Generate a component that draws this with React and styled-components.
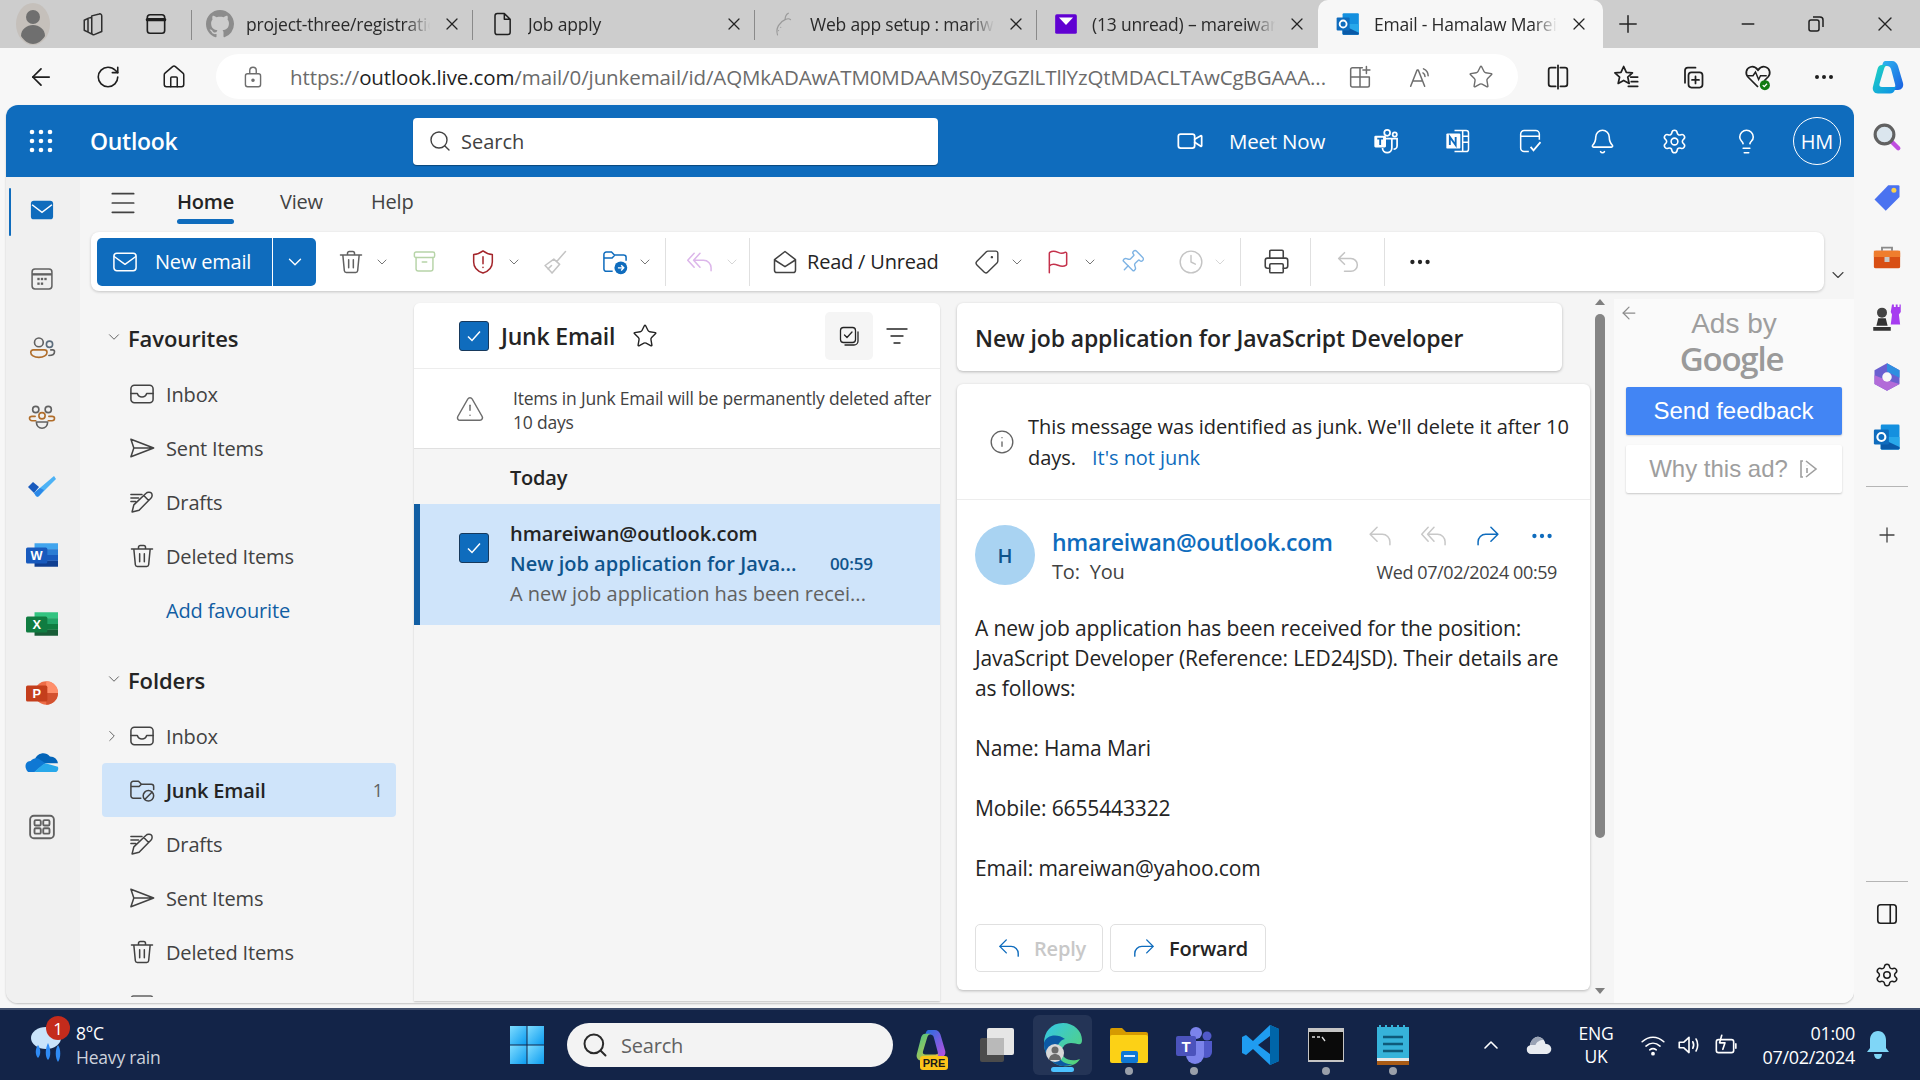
import React from 'react';
import styled, { createGlobalStyle } from 'styled-components';
import { ArrowLeft, RotateCw, Home as HomeI, Plus, X, Minus, Search, Bell, Settings, Lightbulb, Star, Info, TriangleAlert, ChevronDown, ChevronRight, ChevronUp, Menu, Printer, Pin, Clock, Flag, Tag, MoreHorizontal, Video, ListFilter } from 'lucide-react';

const FONT = '"Open Sans", "Noto Sans", sans-serif';

const Global = createGlobalStyle`
  html, body { margin: 0; padding: 0; width: 1920px; height: 1080px; overflow: hidden; background: #f7f7f7; }
  body { font-family: ${FONT}; color: #242424; }
  * { box-sizing: border-box; }
  svg { display: block; flex: none; }
`;

const Ic = ({ s = 24, c = 'currentColor', w = 1.3, vb = '0 0 24 24', children }) => (
  <svg width={s} height={s} viewBox={vb} fill="none" stroke={c} strokeWidth={w} strokeLinecap="round" strokeLinejoin="round">{children}</svg>
);
const MailI = (p) => <Ic {...p}><rect x="2.5" y="4.5" width="19" height="15" rx="2.5" /><path d="M3 7.5l9 6.5 9-6.5" /></Ic>;
const InboxI = (p) => <Ic {...p}><rect x="2.5" y="4.5" width="19" height="15" rx="3" /><path d="M2.5 11.5H8c.6 2 2 3 4 3s3.4-1 4-3h5.5" /></Ic>;
const SendI = (p) => <Ic {...p}><path d="M2.5 4.5L22 12 2.5 19.5 5 12zM5 12h17" /></Ic>;
const DraftI = (p) => <Ic {...p}><path d="M15.5 4.5c1-1 3.5-1.2 4.500-.2s.8 3.300-.2 4.300L9.500 19 3.500 20.500 5 14.500z M13.500 6.500l4.200 4.200 M2.500 5.500H12 M2.500 8.500H9 M2.500 11.500H6.500" /></Ic>;
const TrashI = (p) => <Ic {...p}><path d="M3 6h18M9 6V4.500A1.500 1.500 0 0 1 10.500 3h3A1.500 1.500 0 0 1 15 4.500V6M5 6l1.300 13.500A1.700 1.700 0 0 0 8 21h8a1.700 1.700 0 0 0 1.700-1.500L19 6M10 10v7M14 10v7" /></Ic>;
const JunkI = (p) => <Ic {...p}><path d="M11 19H4.500A2 2 0 0 1 2.500 17V6.500a2 2 0 0 1 2-2h4.500l2.500 2.500h8.500a2 2 0 0 1 2 2v2.500M2.500 9h7l2-2" /><circle cx="17.500" cy="17" r="4.500" /><path d="M14.500 20l6-6" /></Ic>;
const ReplyI = (p) => <Ic {...p}><path d="M9.500 4.500L3.500 10.500l6 6M3.500 10.500H14a6.500 6.500 0 0 1 6.500 6.500v2.500" /></Ic>;
const ReplyAllI = (p) => <Ic {...p}><path d="M7 4.500L1.500 10.500 7 16.500M12 4.500L6.500 10.500l5.500 6M6.500 10.500H15a6.500 6.500 0 0 1 6.500 6.500v2.500" /></Ic>;
const ForwardI = (p) => <Ic {...p}><path d="M14.500 4.500l6 6-6 6M20.500 10.500H10A6.500 6.500 0 0 0 3.500 17v2.500" /></Ic>;
const UndoI = (p) => <Ic {...p}><path d="M9 4L4 9l5 5M4 9h10.500a5.500 5.500 0 0 1 0 11H9" /></Ic>;
const ArchiveI = (p) => <Ic {...p}><rect x="3" y="3.500" width="18" height="5" rx="1.500" /><path d="M4.500 8.500v10A2 2 0 0 0 6.500 20.500h11a2 2 0 0 0 2-2v-10M10 12.500h4" /></Ic>;
const ShieldI = (p) => <Ic {...p}><path d="M12 2.500c2.500 2 5.300 3 8 3v6.500c0 4.500-3 7.800-8 9.500-5-1.700-8-5-8-9.500V5.500c2.700 0 5.500-1 8-3zM12 7.500v6M12 16.500v.3" /></Ic>;
const BroomI = (p) => <Ic {...p}><path d="M21 3l-7.500 8.500M11 9.500l5 4.500-6.500 7.500-6-6.500zM6 18l3-3" /></Ic>;
const MoveI = () => <svg width="28" height="28" viewBox="0 0 24 24" fill="none"><path d="M10 20H4.500a2 2 0 0 1-2-2V5.500a2 2 0 0 1 2-2h4.500l2.500 2.500h8a2 2 0 0 1 2 2v3M2.500 8.500h7l2-2" stroke="#0f6cbd" strokeWidth="1.300" /><circle cx="17" cy="17" r="5.500" fill="#0f6cbd" /><path d="M14.500 17h5M17.300 14.800l2.200 2.200-2.200 2.200" stroke="#fff" strokeWidth="1.200" /></svg>;
const ReadI = (p) => <Ic {...p}><path d="M3 10l9-7 9 7v9a2 2 0 0 1-2 2H5a2 2 0 0 1-2-2zM3.500 10.500L12 16l8.500-5.500" /></Ic>;
const NoteI = () => <svg width="28" height="28" viewBox="0 0 24 24" fill="none" stroke="#fff" strokeWidth="1.300"><path d="M9 3h10a2 2 0 0 1 2 2v14a2 2 0 0 1-2 2H9M16 3v18M16 8h5M16 13h5" /><rect x="2" y="5.500" width="12" height="13" rx="1" fill="#fff" stroke="none" /><path d="M5 15.500v-7l5 7v-7" stroke="#0f6cbd" strokeWidth="1.600" /></svg>;
const TeamsLine = () => <svg width="28" height="28" viewBox="0 0 24 24" fill="none" stroke="#fff" strokeWidth="1.500"><circle cx="13" cy="5" r="2.500" /><circle cx="19.500" cy="6.500" r="1.800" /><path d="M15 10h6.500v6a3 3 0 0 1-3 3M8 10h9v8a4 4 0 0 1-8 0" /><rect x="2" y="7.500" width="10" height="10" rx="1" fill="#fff" stroke="none" /><path d="M4.500 10h5M7 10v5.500" stroke="#0f6cbd" strokeWidth="1.600" /></svg>;
const TodoBoard = () => <svg width="28" height="28" viewBox="0 0 24 24" fill="none" stroke="#fff" strokeWidth="1.300"><path d="M11 21H7a3 3 0 0 1-3-3V6a3 3 0 0 1 3-3h10a3 3 0 0 1 3 3v5M4 8h16" /><path d="M12.500 17l2.500 3 6-7" strokeWidth="1.500" /></svg>;
const Workspaces = () => <Ic s={30} c="#2e2e2e" w={1.200}><path d="M11 5.500l6-1.500a1.500 1.500 0 0 1 2 1.500V18l-6 2.500a1.500 1.500 0 0 1-2-1.500zM11 6.500l-3 1v11l3 1.500M8 7.500l-3 1.500v8l3 1.500" /></Ic>;
const TabsI = () => <Ic s={26} c="#1f1f1f" w={1.500}><rect x="4" y="3.500" width="16" height="17" rx="2.500" /><path d="M4 8h16" strokeWidth="3" /></Ic>;

const AddWidget = () => <Ic s={28} c="#6e6e6e"><path d="M4 12h16v7a1.500 1.500 0 0 1-1.500 1.500h-13A1.500 1.500 0 0 1 4 19zM4 12V5.500A1.500 1.500 0 0 1 5.500 4H14M12 4v16.500M14 12h6M17.500 3v6M14.500 6h6" /></Ic>;
const ReadAloud = () => <Ic s={28} c="#6e6e6e"><path d="M4 20l5.500-14h1L16 20M6 15.500h8M15 5c2.500 1 4 3.200 4 6M14.500 8.500c1 .5 1.800 1.500 1.800 3" /></Ic>;

const Split = () => <Ic s={28} c="#1f1f1f" w={1.500}><path d="M10 4H6a2 2 0 0 0-2 2v12a2 2 0 0 0 2 2h4M14 4h4a2 2 0 0 1 2 2v12a2 2 0 0 1-2 2h-4M12 2v20" /></Ic>;
const Favs = () => <Ic s={28} c="#1f1f1f" w={1.500}><path d="M10 3l2.300 5 5.200.5-4 3.600 1.200 5.400L10 15l-4.700 2.500 1.200-5.400-4-3.600 5.200-.5zM16 12h6M16.500 16h5.500M14 20h8" /></Ic>;
const Collect = () => <Ic s={28} c="#1f1f1f" w={1.500}><path d="M6 17V6.500A2.500 2.500 0 0 1 8.500 4H15" /><rect x="9" y="8" width="12" height="13" rx="2.500" /><path d="M15 11.500v6M12 14.500h6" /></Ic>;
const Health = () => <svg width="30" height="30" viewBox="0 0 24 24" fill="none"><path d="M12 20L4 12c-2.500-2.700-1.500-7 2-8 2.500-.7 4.500.5 6 2.500 1.500-2 3.500-3.200 6-2.500 3.500 1 4.500 5.300 2 8l-3 3" stroke="#1f1f1f" strokeWidth="1.400" /><path d="M4 11h4l2-3 2.500 6 1.500-3h5" stroke="#1f1f1f" strokeWidth="1.200" /><circle cx="17.500" cy="18.500" r="4" fill="#107c10" /><path d="M15.800 18.500l1.200 1.200 2.200-2.300" stroke="#fff" strokeWidth="1" /></svg>;
const CopilotLogo = ({ s = 36, id = 'cp', a = ['#2fb6f0', '#1b5fe0'], b = ['#1fd6c0', '#0e8fe8'] }) => (
  <svg width={s} height={s} viewBox="0 0 36 36">
    <defs>
      <linearGradient id={`${id}a`} x1="0" y1="0" x2="1" y2="1"><stop offset="0" stopColor={a[0]} /><stop offset="1" stopColor={a[1]} /></linearGradient>
      <linearGradient id={`${id}b`} x1="0" y1="0" x2="1" y2="1"><stop offset="0" stopColor={b[0]} /><stop offset="1" stopColor={b[1]} /></linearGradient>
    </defs>
    <path d="M15 2h7c3 0 5 2 6 5l5 17c1 4-1.500 7-5 7h-7c3 0 5-2.500 4-6L21 10c-.6-2-2-3-4-3h-5c.5-2.500 1.500-5 3-5z" fill={`url(#${id}a)`} />
    <path d="M12 6h7c-2.500 0-4.500 1.500-5 4L9.500 25c-.5 2 .5 3 2.500 3h11c1.500 0 2.500-.5 3-1l-1 3.500c-.8 2.500-2.500 4-5 4H8c-4 0-6-3.500-5-7L7.500 10c.8-2.500 2-4 4.500-4z" fill={`url(#${id}b)`} />
  </svg>
);

const LensLogo = () => <svg width="30" height="30" viewBox="0 0 24 24"><path d="M14 14l7 7" stroke="#c04fe0" strokeWidth="3.500" strokeLinecap="round" /><circle cx="10" cy="10" r="7.500" fill="#dbe6ee" stroke="#616161" strokeWidth="2.500" /></svg>;
const TagLogo = () => <svg width="30" height="30" viewBox="0 0 24 24"><path d="M13 2.500h8a1 1 0 0 1 1 1v8.500L11 23l-9-9z" fill="#4a72f0" /><circle cx="17.500" cy="6.500" r="2" fill="#fbd04a" /></svg>;
const ToolboxLogo = () => <svg width="30" height="30" viewBox="0 0 24 24"><path d="M8 7V4.500h8V7" fill="none" stroke="#8a8a8a" strokeWidth="1.500" /><rect x="1.500" y="7" width="21" height="14" rx="1.500" fill="#d84f14" /><rect x="1.500" y="7" width="21" height="5" fill="#ef7d2e" /><rect x="10" y="12" width="4" height="4" fill="#c8c8c8" /></svg>;
const ChessLogo = () => <svg width="30" height="30" viewBox="0 0 24 24"><path d="M16 2h1.500v2H19V2h1.500v2H22V2h1v6l-1.500 2 1 8H15l1-8-1-2z" fill="#a63cf0" /><circle cx="8" cy="8.500" r="4" fill="#444" /><path d="M5 13h6l1.500 6H3.500zM1 20h14v3H1z" fill="#333" /></svg>;
const M365Logo = () => <svg width="30" height="30" viewBox="0 0 24 24"><path d="M12 1l10 5.500v11L12 23 2 17.500v-11z" fill="#6a5fd0" /><path d="M12 1l10 5.500v6L12 7.500z" fill="#2f8fe0" /><path d="M2 10.500V17.500L12 23l10-5.500-10-3z" fill="#b26bd8" /><circle cx="12" cy="12" r="3.800" fill="#f7f7f7" /></svg>;
const OutlookLogo = ({ s = 30 }) => <svg width={s} height={s} viewBox="0 0 24 24"><rect x="7" y="2" width="15" height="20" rx="1" fill="#1490df" /><path d="M7 12l15 0v9a1 1 0 0 1-1 1H8a1 1 0 0 1-1-1z" fill="#28a8ea" /><path d="M7 13l15 7v1a1 1 0 0 1-1 1H8a1 1 0 0 1-1-1z" fill="#0a5aa8" /><rect x="1.500" y="6" width="12" height="12" rx="1" fill="#0f6cbd" /><circle cx="7.500" cy="12" r="3.200" fill="none" stroke="#fff" strokeWidth="1.700" /></svg>;

const BrandTile = ({ letter, tile, bands, round }) => (
  <svg width="32" height="24" viewBox="0 0 30 22">
    {round
      ? <g><circle cx="19" cy="11" r="11" fill="#ed6c47" /><path d="M19 0a11 11 0 0 1 11 11H19z" fill="#ff8f6b" /><path d="M19 11h11a11 11 0 0 1-11 11z" fill="#d35230" /></g>
      : bands.map((b, i) => <rect key={b} x="8" y={i * 5.5} width="22" height="5.5" fill={b} />)}
    <rect x="0" y="4" width="20" height="15" rx="1.500" fill={tile} />
    <text x="10" y="16" textAnchor="middle" fontFamily="Liberation Sans, sans-serif" fontWeight="700" fontSize="12" fill="#fff">{letter}</text>
  </svg>
);
const OneDriveLogo = ({ s = 34 }) => <svg width={s} height={s * 0.6} viewBox="0 0 30 18"><path d="M9 6c2-5 9-7 13-2 4 0 7 3 7 6H12z" fill="#0364b8" /><path d="M1 15c-1.500-3 0-7 4-7 2-2 4-3 7-2l6 4-10 8H4c-1 0-2.500-1-3-3z" fill="#0f78d4" /><path d="M8 18h18c3 0 4-3 3-5l-11-3c-4 2-7 5-10 8z" fill="#28a8ea" /></svg>;
const TodoLogo = () => <svg width="30" height="24" viewBox="0 0 30 24"><path d="M1 13l5-5 6 5-5 6z" fill="#185abd" /><path d="M7 19l20-17 2 3-17 17c-1 1-2 1-3 0z" fill="#4db2f5" /><path d="M7 19l6-5 4 2-5 6c-1 1-2 1-3 0z" fill="#2b88e8" /></svg>;
const PeopleI = () => <Ic s={30} c="#5b6c7c"><circle cx="9.500" cy="7.500" r="3.500" stroke="#616161" /><circle cx="18" cy="9" r="2.500" /><path d="M3 15.500a2 2 0 0 1 2-2h9a2 2 0 0 1 2 2c0 2-2.500 4-6.500 4S3 17.500 3 15.500z" stroke="#b06d2a" /><path d="M19 13.500h1.500a1.500 1.500 0 0 1 1.500 1.500c0 1.500-1.500 3-4.500 3" stroke="#616161" /></Ic>;
const GroupsI = () => <Ic s={30} c="#616161"><circle cx="7" cy="6" r="2.500" /><circle cx="17" cy="6" r="2.500" /><circle cx="12" cy="11" r="2.500" stroke="#b06d2a" /><path d="M7 15H4a2 2 0 0 1-2-2c0-1 .8-1.500 2-1.500h2.500M17 15h3a2 2 0 0 0 2-2c0-1-.8-1.500-2-1.500h-2.500" stroke="#b06d2a" /><path d="M7.500 16h9c0 3-2 5-4.500 5s-4.500-2-4.500-5z" /></Ic>;
const CalI = () => <svg width="28" height="28" viewBox="0 0 24 24" fill="none" stroke="#616161" strokeWidth="1.300"><rect x="3.500" y="3.500" width="17" height="17" rx="2.500" /><path d="M3.500 8h17" strokeWidth="2" /><g fill="#616161" stroke="none"><rect x="8" y="11" width="2" height="2" /><rect x="11" y="11" width="2" height="2" /><rect x="14" y="11" width="2" height="2" /><rect x="8" y="15" width="2" height="2" /><rect x="11" y="15" width="2" height="2" /></g></svg>;
const AppsI = () => <svg width="30" height="30" viewBox="0 0 24 24" fill="none" stroke="#616161" strokeWidth="1.500"><rect x="2.500" y="3" width="19" height="18" rx="3" /><rect x="6" y="6.500" width="5" height="4.300" rx="1" /><rect x="13" y="6.500" width="5" height="4.300" rx="1" /><rect x="6" y="13" width="5" height="4.300" rx="1" /><rect x="13" y="13" width="5" height="4.300" rx="1" /></svg>;
const RailMail = () => <svg width="28" height="28" viewBox="0 0 24 24"><rect x="2.500" y="4" width="19" height="16" rx="2.500" fill="#0f6cbd" /><path d="M3.500 7.500L12 14l8.500-6.500" stroke="#fff" strokeWidth="1.300" fill="none" /></svg>;
const MultiSel = () => <Ic s={24} c="#242424"><rect x="3.500" y="3.500" width="15" height="15" rx="3" /><path d="M7.500 11l2.500 2.500 5-5.500M21 8v9a4 4 0 0 1-4 4H8" /></Ic>;
const PanelI = () => <Ic s={26} c="#1f1f1f" w={1.500}><rect x="3.500" y="3.500" width="17" height="17" rx="2.500" /><path d="M15 3.500v17" /></Ic>;

const GitHubLogo = () => <svg width="28" height="28" viewBox="0 0 16 16" fill="#8c8c8c"><path d="M8 0C3.580 0 0 3.580 0 8c0 3.540 2.290 6.530 5.470 7.590.4.070.55-.170.55-.380 0-.190-.010-.820-.010-1.490-2.010.370-2.530-.490-2.690-.940-.090-.230-.480-.940-.820-1.130-.280-.150-.680-.520-.010-.530.630-.010 1.080.580 1.230.820.720 1.210 1.870.870 2.330.660.070-.520.280-.870.510-1.070-1.780-.200-3.640-.890-3.640-3.950 0-.870.310-1.590.820-2.150-.080-.200-.360-1.020.080-2.120 0 0 .670-.210 2.200.820.640-.180 1.320-.270 2-.270s1.360.090 2 .270c1.530-1.040 2.200-.820 2.200-.820.440 1.100.160 1.920.080 2.120.510.560.820 1.270.820 2.150 0 3.070-1.870 3.750-3.650 3.950.290.250.540.730.540 1.480 0 1.070-.010 1.930-.010 2.200 0 .210.150.460.550.380A8.010 8.010 0 0 0 16 8c0-4.420-3.580-8-8-8z" /></svg>;
const DocI = () => <Ic s={28} c="#1f1f1f" w={1.300}><path d="M6 5a2 2 0 0 1 2-2h6l5 5v11a2 2 0 0 1-2 2H8a2 2 0 0 1-2-2zM14 3v5h5" /></Ic>;
const SproutI = () => <Ic s={26} c="#9a9a9a" w={1.100}><path d="M6 22c-2-6 2-12 7-14M13 8c0-3 1-5 3-6M13 8c2-1 4-1 5 0M9 15v.1M7 18v.1" /></Ic>;
const YahooI = () => <svg width="26" height="26" viewBox="0 0 24 24"><rect x="2" y="3" width="20" height="18" rx="1.500" fill="#6001d2" /><path d="M5.500 6h13L12 13z" fill="#fff" /></svg>;

const Avatar = () => <svg width="38" height="44" viewBox="0 0 38 44"><ellipse cx="19" cy="22" rx="17" ry="21" fill="#c5c0bb" /><circle cx="19" cy="15" r="7" fill="#6f6f6f" /><path d="M7 34c0-7 6-11 12-11s12 4 12 11c-3 5-8 8-12 8s-9-3-12-8z" fill="#6f6f6f" /></svg>;

const Page = styled.div`width: 1920px; height: 1080px; display: flex; flex-direction: column; overflow: hidden;`;

const TabStrip = styled.div`height: 48px; background: #cdcdcd; display: flex; align-items: center;`;
const StripSlot = styled.div`width: ${(p) => p.$w}px; height: 48px; display: flex; align-items: center; justify-content: center; flex: none;`;
const Tab = styled.div`
  width: ${(p) => p.$w}px; height: 48px; flex: none; display: flex; align-items: center; padding: 0 11px 0 15px; position: relative;
  ${(p) => p.$active ? 'background:#f7f7f7; border-radius: 10px 10px 0 0; padding-left:16px; padding-right:14px;' : ''}
  ${(p) => p.$rule ? `&::after{content:'';position:absolute;right:0;top:10px;bottom:8px;width:1px;background:#8a8a8a;}` : ''}
  ${(p) => p.$ruleLeft ? `&::before{content:'';position:absolute;left:0;top:10px;bottom:8px;width:1px;background:#8a8a8a;}` : ''}
`;
const TabIcon = styled.div`width: 28px; display: flex; justify-content: center; margin-right: ${(p) => p.$mr ?? 12}px;`;
const TabText = styled.div`
  flex: 1; min-width: 0; margin-right: 6px; font-size: 17.5px; color: #2a2a2a; white-space: nowrap; overflow: hidden; letter-spacing: -0.2px;
  mask-image: linear-gradient(90deg, #000 84%, transparent 97%);
`;
const WinSlot = styled.div`width: ${(p) => p.$w}px; margin-left: ${(p) => p.$ml || 0}px; display: flex; justify-content: center; flex: none;`;

const AddressRow = styled.div`height: 57px; background: #f7f7f7; display: flex; align-items: center; flex: none;`;
const NavSlot = styled.div`width: ${(p) => p.$w}px; margin-left: ${(p) => p.$ml || 0}px; display: flex; justify-content: center; flex: none;`;
const Pill = styled.div`width: 1302px; height: 45px; margin-left: 27px; background: #fff; border-radius: 23px; display: flex; align-items: center; padding-left: 24px; flex: none;`;
const Url = styled.div`width: 1040px; margin-left: 24px; font-size: 20.5px; color: #6b6b6b; white-space: nowrap; overflow: hidden; letter-spacing: -0.1px; b { font-weight: 400; color: #1f1f1f; }`;

const Workarea = styled.div`flex: 1; min-height: 0; display: flex;`;
const Frame = styled.div`
  width: 1848px; height: 898px; margin-left: 6px; flex: none; display: flex; flex-direction: column; overflow: hidden;
  border-radius: 12px; background: #f5f5f5; box-shadow: 0 1px 2px rgba(0,0,0,.22);
`;
const Header = styled.div`height: 72px; flex: none; background: #0f6cbd; display: flex; align-items: center; color: #fff;`;
const HeadSlot = styled.div`width: ${(p) => p.$w}px; margin-left: ${(p) => p.$ml || 0}px; display: flex; justify-content: center; flex: none;`;
const Brand = styled.div`margin-left: 35px; width: 110px; font-size: 23px; font-weight: 600; letter-spacing: -0.3px;`;
const HeadSearch = styled.div`width: 525px; height: 47px; margin-left: 213px; background: #fff; border-radius: 4px; box-shadow: 0 1px 1px rgba(0,0,0,.35); display: flex; align-items: center; padding-left: 15px; color: #424242; font-size: 20px; gap: 9px;`;
const MeetNow = styled.div`margin-left: 25px; width: 114px; font-size: 20.5px; white-space: nowrap; letter-spacing: -0.2px;`;
const Initials = styled.div`width: 48px; height: 48px; margin-left: 33px; border: 1px solid #fff; border-radius: 50%; display: flex; align-items: center; justify-content: center; font-size: 20px;`;

const AppBody = styled.div`flex: 1; min-height: 0; display: flex;`;
const Rail = styled.div`width: 74px; flex: none; background: #f0f0f0; display: flex; flex-direction: column; align-items: center;`;
const RailItem = styled.div`
  height: 69px; width: 100%; flex: none; display: flex; align-items: center; justify-content: center; position: relative; padding-right: 2px;
  &:first-child { height: 66px; margin-bottom: 1.5px; }
  &:last-child { margin-top: -4px; }
  ${(p) => p.$active ? `&::before{content:'';position:absolute;left:3px;top:11px;width:2px;height:48px;background:#0f6cbd;border-radius:2px;}` : ''}
`;
const Main = styled.div`flex: 1; min-width: 0; display: flex; flex-direction: column;`;
const RibbonTabs = styled.div`height: 55px; flex: none; display: flex; align-items: center;`;
const RibbonTab = styled.div`
  font-size: 20px; margin-left: ${(p) => p.$ml}px; position: relative; height: 55px; line-height: 50px; width: ${(p) => p.$w}px; white-space: nowrap; letter-spacing: -0.2px;
  color: ${(p) => p.$active ? '#242424' : '#424242'}; font-weight: ${(p) => p.$active ? 600 : 400};
  ${(p) => p.$active ? `&::after{content:'';position:absolute;left:0;right:0;bottom:8px;height:5px;border-radius:3px;background:#0f6cbd;}` : ''}
`;
const HamSlot = styled.div`width: 34px; margin-left: 27px; margin-top: -4px; color: #424242;`;
const RibbonRow = styled.div`height: 59px; flex: none; display: flex;`;
const Toolbar = styled.div`width: 1733px; height: 59px; margin-left: 11px; background: #fff; border-radius: 8px; box-shadow: 0 1px 3px rgba(0,0,0,.2); display: flex; align-items: center; padding-left: 6px;`;
const NewEmail = styled.div`width: 219px; height: 48px; flex: none; background: #0f6cbd; border-radius: 5px; color: #fff; display: flex; align-items: center; font-size: 20px;`;
const NewMain = styled.div`width: 176px; height: 100%; display: flex; align-items: center; padding-left: 14px; gap: 16px; border-right: 1px solid #fff; letter-spacing: -0.2px; white-space: nowrap;`;
const NewDrop = styled.div`flex: 1; display: flex; justify-content: center;`;
const Tool = styled.div`
  width: ${(p) => p.$w || 28}px; margin-left: ${(p) => p.$ml}px; flex: none; display: flex; justify-content: center; color: ${(p) => p.$c || '#616161'};
  ${(p) => p.$tf ? `transform: ${p.$tf};` : ''}
`;
const ToolSep = styled.div`width: 1px; height: 48px; background: #e0e0e0; margin-left: ${(p) => p.$ml}px; flex: none;`;
const ToolLabel = styled.div`width: 133px; margin-left: ${(p) => p.$ml}px; flex: none; font-size: 20px; color: #242424; white-space: nowrap; letter-spacing: -0.2px;`;
const OuterChevron = styled.div`align-self: flex-end; margin: 0 0 6px 4px; color: #424242;`;

const Content = styled.div`flex: 1; min-height: 0; display: flex;`;
const FolderPane = styled.div`width: 334px; flex: none; padding: 19px 0 0 22px; height: 706px; overflow: hidden;`;
const SectionHead = styled.div`height: 55px; margin-top: ${(p) => p.$mt || 0}px; margin-bottom: 2px; display: flex; align-items: center; font-size: 22px; font-weight: 600; color: #242424; letter-spacing: -0.1px; margin-left: -2px;`;
const Caret = styled.div`width: 28px; display: flex; justify-content: center; color: #616161; margin-top: -2px;`;
const FolderRow = styled.div`
  width: 294px; height: 54px; display: flex; align-items: center; padding-left: 24px; border-radius: 4px; font-size: 20px; position: relative; letter-spacing: -0.15px;
  color: ${(p) => p.$link ? '#115ea3' : '#424242'};
  ${(p) => p.$sel ? 'background:#cfe4fa; color:#242424; font-weight:600;' : ''}
`;
const FolderIcon = styled.div`width: 28px; margin-right: 10px; margin-left: 2px; display: flex; justify-content: center; color: #424242; flex: none;`;
const RowCaret = styled.div`position: absolute; left: -4px; width: 27px; display: flex; justify-content: center; color: #616161;`;
const Count = styled.div`margin-left: auto; margin-right: 13px; font-weight: 400; font-size: 18px; color: #616161;`;

const ListPane = styled.div`width: 526px; flex: none; margin-top: 12px; margin-bottom: 2px; background: #f5f5f5; border-radius: 6px 6px 0 0; box-shadow: 0 1px 2px rgba(0,0,0,.2); overflow: hidden; display: flex; flex-direction: column;`;
const ListHead = styled.div`height: 66px; flex: none; background: #fff; border-bottom: 1px solid #ededed; display: flex; align-items: center; padding-left: 45px;`;
const Check = styled.div`width: 30px; height: 30px; flex: none; background: #0f6cbd; border: 1px solid #17395c; border-radius: 3px; display: flex; align-items: center; justify-content: center; color: #fff; ${(p) => p.$top ? `align-self: flex-start; margin-top: ${p.$top}px;` : ''}`;
const ListTitle = styled.div`margin-left: 12px; font-size: 23px; font-weight: 600; letter-spacing: -0.2px; white-space: nowrap; width: 118px;`;
const StarSlot = styled.div`margin-left: 13px; color: #242424;`;
const IconBtn = styled.div`width: 48px; height: 48px; margin-left: auto; background: #f5f5f5; border-radius: 5px; display: flex; align-items: center; justify-content: center;`;
const FilterSlot = styled.div`margin: 0 31px 0 12px; color: #242424;`;
const Notice = styled.div`height: 80px; flex: none; background: #fff; border-bottom: 1px solid #e0e0e0; display: flex; align-items: center; padding-left: 41px; color: #6d6d6d;`;
const NoticeText = styled.div`margin-left: 28px; padding-top: 3px; font-size: 17.5px; line-height: 24px; color: #424242; white-space: nowrap; letter-spacing: -0.2px;`;
const DayRow = styled.div`height: 55px; flex: none; display: flex; align-items: center; padding: 2px 0 0 96px; font-size: 20px; font-weight: 600; letter-spacing: -0.2px;`;
const MailRow = styled.div`height: 121px; flex: none; background: #cfe4fa; border-left: 6px solid #115ea3; display: flex; padding-left: 39px; align-items: center;`;
const MailLines = styled.div`margin-left: 21px; flex: 1; min-width: 0; display: flex; flex-direction: column; font-size: 20px; line-height: 30px; margin-top: -2px;`;
const Sender = styled.div`font-weight: 600; color: #242424; letter-spacing: -0.05px;`;
const SubjectLine = styled.div`display: flex; color: #0f548c; font-weight: 600; white-space: nowrap;`;
const TimeText = styled.div`margin-left: auto; margin-right: 67px; font-size: 17px; letter-spacing: -0.1px;`;
const Preview = styled.div`color: #616161; white-space: nowrap;`;

const ReadingCol = styled.div`width: 633px; margin-left: 17px; flex: none; display: flex; flex-direction: column; padding-top: 12px; padding-bottom: 13px;`;
const SubjectCard = styled.div`width: 605px; height: 68px; flex: none; background: #fff; border-radius: 6px; box-shadow: 0 1px 3px rgba(0,0,0,.25); display: flex; align-items: center; padding: 2px 0 0 18px; font-size: 23px; font-weight: 600; white-space: nowrap; letter-spacing: -0.13px;`;
const MailCard = styled.div`flex: 1; min-height: 0; margin-top: 13px; background: #fff; border-radius: 6px; box-shadow: 0 1px 3px rgba(0,0,0,.25); display: flex; flex-direction: column;`;
const JunkBar = styled.div`height: 116px; flex: none; border-bottom: 1px solid #ededed; display: flex; align-items: center; padding-left: 32px; color: #616161;`;
const JunkText = styled.div`margin-left: 13px; font-size: 20px; line-height: 31px; color: #242424; white-space: nowrap; letter-spacing: -0.05px; a { color: #0f6cbd; margin-left: 11px; }`;
const MsgHead = styled.div`display: flex; padding: 25px 0 0 18px; height: 88px; flex: none;`;
const Persona = styled.div`width: 60px; height: 60px; border-radius: 50%; background: #a9d3f2; color: #0f548c; display: flex; align-items: center; justify-content: center; font-size: 20px; font-weight: 600; flex: none;`;
const MsgFrom = styled.div`margin-left: 17px; width: 322px; display: flex; flex-direction: column;`;
const FromName = styled.div`color: #0f6cbd; font-size: 23px; font-weight: 600; line-height: 34px; white-space: nowrap; letter-spacing: -0.25px;`;
const ToLine = styled.div`font-size: 20px; line-height: 26px; color: #424242; letter-spacing: -0.2px;`;
const MsgMeta = styled.div`display: flex; flex-direction: column; align-items: flex-end; width: 183px; margin-top: -5px;`;
const MetaIcons = styled.div`display: flex; gap: 26px; margin-right: 1px; height: 32px; align-items: center;`;
const MetaIcon = styled.div`width: 28px; display: flex; justify-content: center; color: ${(p) => p.$c};`;
const MetaDate = styled.div`font-size: 18px; color: #424242; margin-top: 8px; white-space: nowrap; letter-spacing: -0.4px;`;
const MsgBody = styled.div`padding: 25px 0 0 18px; font-size: 21px; line-height: 30px; color: #242424; letter-spacing: -0.13px; white-space: nowrap;`;
const Gap30 = styled.div`height: 30px;`;
const ActionRow = styled.div`display: flex; gap: 7px; padding-left: 18px; margin-top: 41px;`;
const ActionBtn = styled.div`width: ${(p) => p.$w}px; height: 48px; background: #fff; border: 1px solid #e0e0e0; border-radius: 5px; display: flex; align-items: center; padding-left: 20px; gap: 12px; font-size: 20px; font-weight: 600; color: ${(p) => p.$c}; letter-spacing: -0.2px;`;
const ActionIcon = styled.span`color: #0f6cbd;`;

const ScrollTrack = styled.div`width: 10px; margin-left: 5px; flex: none; display: flex; flex-direction: column; align-items: center; padding-top: 8px;`;
const ArrowUp = styled.div`width: 0; height: 0; border: 5px solid transparent; border-top: 0; border-bottom: 6px solid #7f7f7f;`;
const ArrowDown = styled.div`width: 0; height: 0; border: 5px solid transparent; border-bottom: 0; border-top: 6px solid #7f7f7f; margin-top: 150px;`;
const Thumb = styled.div`width: 10px; height: 524px; margin-top: 9px; background: #858585; border-radius: 5px;`;

const AdPane = styled.div`width: 240px; margin-left: 9px; margin-top: 8px; flex: none; background: #fafafa; display: flex; flex-direction: column; align-items: center; padding-top: 6px; position: relative;`;
const AdBack = styled.div`position: absolute; left: 5px; top: 4px; color: #8c8c8c;`;
const AdsBy = styled.div`font-family: "Liberation Sans", sans-serif; font-size: 28px; line-height: 38px; color: #9e9e9e;`;
const GoogleWord = styled.div`font-family: "Open Sans", sans-serif; font-weight: 600; font-size: 33px; line-height: 36px; color: #9a9a9a; letter-spacing: -1.2px; margin-top: -2px; margin-right: 5px;`;
const SendFeedback = styled.div`width: 216px; height: 48px; margin-top: 10px; margin-right: 1px; background: #4285f4; border-radius: 2px; box-shadow: 0 1px 2px rgba(0,0,0,.2); color: #fff; display: flex; align-items: center; justify-content: center; font: 24px "Liberation Sans", sans-serif;`;
const WhyAd = styled.div`width: 216px; height: 48px; margin-top: 10px; margin-right: 1px; background: #fff; border-radius: 2px; box-shadow: 0 1px 2px rgba(0,0,0,.2); color: #9e9e9e; display: flex; align-items: center; justify-content: center; gap: 10px; font: 24px "Liberation Sans", sans-serif;`;

const EdgeSide = styled.div`width: 66px; flex: none; background: #f7f7f7; display: flex; flex-direction: column; align-items: center; padding-top: 2px;`;
const SideSlot = styled.div`height: ${(p) => p.$h || 60}px; display: flex; align-items: center; justify-content: center; flex: none; color: #424242;`;
const SideRule = styled.div`width: 42px; height: 1px; background: #b5b5b5; margin-top: ${(p) => p.$mt}px; flex: none;`;

const Taskbar = styled.div`height: 72px; flex: none; background: #132448; border-top: 2px solid #41506e; display: flex; align-items: center; color: #fff;`;
const TbSlot = styled.div`
  width: ${(p) => p.$w}px; margin-left: ${(p) => p.$ml}px; flex: none; display: flex; justify-content: center; position: relative; align-items: center;
  ${(p) => p.$dot ? `&::after{content:'';position:absolute;left:50%;margin-left:-4px;top:calc(50% + 22px);width:8px;height:8px;border-radius:50%;background:#9aa0aa;}` : ''}
`;
const Badge = styled.div`position: absolute; left: 18px; top: -9px; width: 24px; height: 24px; border-radius: 50%; background: #c42b1c; color: #fff; font-size: 17px; display: flex; align-items: center; justify-content: center;`;
const PreTag = styled.div`position: absolute; left: 6px; bottom: -8px; width: 28px; height: 14px; border-radius: 3px; background: #fcc419; color: #1a1a1a; font: 700 11px/14px "Liberation Sans", sans-serif; text-align: center;`;
const Weather = styled.div`margin-left: 10px; width: 130px; flex: none; font-size: 17.5px; line-height: 24px; letter-spacing: -0.2px; white-space: nowrap; span { color: #cdd2dc; display: block; }`;
const TbSearch = styled.div`width: 326px; height: 44px; margin-left: 23px; flex: none; border-radius: 22px; background: #f3f3f3; color: #616161; display: flex; align-items: center; padding-left: 14px; gap: 12px; font-size: 20px; letter-spacing: -0.2px;`;
const EdgeTile = styled.div`width: 59px; height: 60px; margin-left: 18px; flex: none; background: #243456; border-radius: 6px; display: flex; align-items: center; justify-content: center; position: relative; &::after{content:'';position:absolute;left:18px;bottom:3px;width:23px;height:5px;border-radius:3px;background:#4cc2ff;}`;
const Lang = styled.div`width: 44px; margin-left: 22px; flex: none; text-align: center; font-size: 17.5px; line-height: 23px; letter-spacing: -0.2px;`;
const ClockBox = styled.div`width: 100px; margin-left: 17px; flex: none; text-align: right; font-size: 18px; line-height: 24px; letter-spacing: -0.3px; white-space: nowrap;`;

const Chev = ({ c = '#616161', s = 16 }) => <ChevronDown size={s} strokeWidth={1.3} color={c} />;
const CheckMark = () => <svg width="20" height="20" viewBox="0 0 20 20" fill="none" stroke="#fff" strokeWidth="1.500"><path d="M4 10.500l4 4 8-9" /></svg>;

const WinLogo = () => <svg width="34" height="38" viewBox="0 0 34 38"><defs><linearGradient id="wg" x1="0" y1="0" x2="1" y2="1"><stop offset="0" stopColor="#7fdcff" /><stop offset="1" stopColor="#0b9cf0" /></linearGradient></defs><rect x="0" y="0" width="16.500" height="18.500" fill="url(#wg)" /><rect x="17.500" y="0" width="16.500" height="18.500" fill="url(#wg)" /><rect x="0" y="19.500" width="16.500" height="18.500" fill="url(#wg)" /><rect x="17.500" y="19.500" width="16.500" height="18.500" fill="url(#wg)" /></svg>;
const RainLogo = () => <svg width="38" height="40" viewBox="0 0 38 40"><ellipse cx="18" cy="13" rx="15" ry="11" fill="#c9e3fa" /><path d="M10 20c3 4 3 10 0 13-3-3-3-9 0-13zM20 18c3 6 3 14 0 17-3-3-3-11 0-17zM30 20c3 4 3 13 0 17-3-4-3-13 0-17z" fill="#2f8bf5" /></svg>;
const TaskView = () => <svg width="36" height="36" viewBox="0 0 36 36"><rect x="1" y="11" width="24" height="24" rx="2" fill="#4b4b4b" /><rect x="8" y="1" width="27" height="27" rx="2" fill="#e6e6e6" /><rect x="8" y="11" width="17" height="17" fill="#b9b9b9" /></svg>;
const EdgeLogo = () => <svg width="40" height="44" viewBox="0 0 40 44"><defs><linearGradient id="eg" x1="0" y1="0" x2="1" y2="1"><stop offset="0" stopColor="#33c6e8" /><stop offset="1" stopColor="#5ad46b" /></linearGradient></defs><path d="M20 0C8 0 1 9 1 20c0 12 8 22 19 23 8 1 14-2 17-7-5 2-12 2-16-2-3-3-3-8 0-11 0 0 2-3 7-3 6 0 11 4 11-3C39 8 31 0 20 0z" fill="url(#eg)" /><path d="M1 20c0 12 8 22 19 23 4 0 7-1 10-2-8 1-15-4-16-12-1-6 3-12 8-13C14 10 3 12 1 20z" fill="#0c59a4" /><circle cx="12" cy="30" r="9" fill="#d8d8d8" /><circle cx="12" cy="27" r="3.500" fill="#6a6a6a" /><path d="M6 37c0-4 3-6 6-6s6 2 6 6z" fill="#6a6a6a" /></svg>;
const FilesLogo = () => <svg width="38" height="36" viewBox="0 0 38 36"><path d="M0 3a2 2 0 0 1 2-2h10l4 4h20a2 2 0 0 1 2 2v5H0z" fill="#d69a00" /><rect x="0" y="8" width="38" height="28" rx="2" fill="#fcd116" /><rect x="11" y="24" width="17" height="12" rx="2" fill="#0f78d4" /><rect x="14" y="28" width="11" height="2" fill="#d5eaff" /></svg>;
const TeamsLogo = () => <svg width="38" height="38" viewBox="0 0 38 38"><circle cx="21" cy="7" r="6" fill="#7b83eb" /><circle cx="32" cy="10" r="4.500" fill="#5059c9" /><path d="M25 15h12v11a6 6 0 0 1-12 0z" fill="#5059c9" /><path d="M11 15h18v14a9 9 0 0 1-18 0z" fill="#7b83eb" /><rect x="1" y="10" width="20" height="20" rx="2" fill="#4b53bc" /><text x="11" y="26" textAnchor="middle" fontSize="15" fontWeight="700" fontFamily="Liberation Sans, sans-serif" fill="#fff">T</text></svg>;
const VsCode = () => <svg width="38" height="40" viewBox="0 0 38 40"><path d="M28 0l9 4v32l-9 4-17-16-7 6-4-2V12l4-2 7 6zM28 11L16 20l12 9z" fill="#1f9cf0" /><path d="M28 0l9 4v32l-9 4z" fill="#0065a9" /></svg>;
const CmdLogo = () => <svg width="36" height="34" viewBox="0 0 36 34"><rect width="36" height="34" fill="#c5c5c5" /><rect x="1" y="4" width="34" height="28" fill="#0a0a0a" /><path d="M4 9h3M9 9h3M14 9l3 4" stroke="#ddd" strokeWidth="1.300" /></svg>;
const NotesLogo = () => <svg width="32" height="40" viewBox="0 0 32 40"><rect x="0" y="2" width="32" height="34" fill="#36b3da" /><rect x="0" y="33" width="32" height="3" fill="#e8e8e8" /><rect x="0" y="36" width="32" height="4" fill="#a85b16" /><path d="M6 12h20M6 19h20M6 26h20" stroke="#0e5a7a" strokeWidth="2.500" /><path d="M3 0v4M9 0v4M15 0v4M21 0v4M27 0v4" stroke="#36b3da" strokeWidth="2" /></svg>;
const CloudLogo = () => <svg width="26" height="20" viewBox="0 0 26 20"><path d="M5 19a4.500 4.500 0 0 1-1-8.800C5 5 9 1 13 2c4 1 6 4 6.500 7A5 5 0 0 1 21 19z" fill="#e8ebf0" /><path d="M4 10c1-5 5-9 9-8 2 .5 3.500 1.500 4.500 3-4 0-7 2-8 5z" fill="#9aa3b5" /></svg>;
const WifiI = () => <Ic s={26} c="#fff" w={1.500}><path d="M2 9c6-5.500 14-5.500 20 0M5.500 13c4-3.500 9-3.500 13 0M9 16.500c2-1.500 4-1.500 6 0" /><circle cx="12" cy="20" r="1" fill="#fff" /></Ic>;
const SpeakerI = () => <Ic s={26} c="#fff" w={1.500}><path d="M3 9.500h4L12 5v14l-5-4.500H3zM15.500 9c1 1.800 1 4.200 0 6M18.500 6.500c2 3 2 8 0 11" /></Ic>;
const BatteryI = () => <Ic s={26} c="#fff" w={1.500}><rect x="4" y="7" width="16" height="12" rx="2" /><path d="M22 11v4M9 3l-2 7h5l-2 6" /></Ic>;
const TbBell = () => <svg width="22" height="30" viewBox="0 0 22 30"><path d="M11 1c5 0 8 4 8 9v8l3 4H0l3-4v-8c0-5 3-9 8-9z" fill="#7fd6f7" /><path d="M7 24h8c0 3-2 5-4 5s-4-2-4-5z" fill="#7fd6f7" /></svg>;

const favourites = [['Inbox', InboxI], ['Sent Items', SendI], ['Drafts', DraftI], ['Deleted Items', TrashI]];
const folders = [['Drafts', DraftI], ['Sent Items', SendI], ['Deleted Items', TrashI]];

function Folder({ label, Icon }) {
  return <FolderRow><FolderIcon><Icon s={28} /></FolderIcon>{label}</FolderRow>;
}

export default function App() {
  return (
    <Page>
      <Global />
      <TabStrip>
        <StripSlot $w={66}><Avatar /></StripSlot>
        <StripSlot $w={54}><Workspaces /></StripSlot>
        <StripSlot $w={71}><TabsI /></StripSlot>
        <Tab $w={282} $rule $ruleLeft><TabIcon><GitHubLogo /></TabIcon><TabText>project-three/registration</TabText><X size={20} strokeWidth={1.5} /></Tab>
        <Tab $w={282} $rule><TabIcon><DocI /></TabIcon><TabText>Job apply</TabText><X size={20} strokeWidth={1.5} /></Tab>
        <Tab $w={282} $rule><TabIcon><SproutI /></TabIcon><TabText>Web app setup : mariwan</TabText><X size={20} strokeWidth={1.5} /></Tab>
        <Tab $w={281}><TabIcon><YahooI /></TabIcon><TabText>(13 unread) – mareiwan</TabText><X size={20} strokeWidth={1.5} /></Tab>
        <Tab $w={285} $active><TabIcon $mr={12}><OutlookLogo s={26} /></TabIcon><TabText>Email - Hamalaw Mareiwan</TabText><X size={20} strokeWidth={1.5} /></Tab>
        <WinSlot $w={30} $ml={10}><Plus size={28} strokeWidth={1.3} /></WinSlot>
        <WinSlot $w={24} $ml={93}><Minus size={20} strokeWidth={1.6} /></WinSlot>
        <WinSlot $w={24} $ml={44}><svg width="18" height="18" viewBox="0 0 18 18" fill="none" stroke="#1f1f1f" strokeWidth="1.500"><rect x="2" y="5" width="10" height="11" rx="2" /><path d="M6 2h7a3 3 0 0 1 3 3v7" /></svg></WinSlot>
        <WinSlot $w={24} $ml={45}><X size={24} strokeWidth={1.4} /></WinSlot>
      </TabStrip>

      <AddressRow>
        <NavSlot $w={30} $ml={26}><ArrowLeft size={28} strokeWidth={1.5} color="#1f1f1f" /></NavSlot>
        <NavSlot $w={30} $ml={37}><RotateCw size={26} strokeWidth={1.5} color="#1f1f1f" /></NavSlot>
        <NavSlot $w={30} $ml={36}><HomeI size={26} strokeWidth={1.4} color="#1f1f1f" /></NavSlot>
        <Pill>
          <svg width="26" height="26" viewBox="0 0 24 24" fill="none" stroke="#6e6e6e" strokeWidth="1.300"><rect x="5" y="9" width="14" height="12" rx="2" /><path d="M9 9V6a3 3 0 0 1 6 0v3" /><circle cx="12" cy="15" r="1" fill="#6e6e6e" /></svg>
          <Url>https://<b>outlook.live.com</b>/mail/0/junkemail/id/AQMkADAwATM0MDAAMS0yZGZlLTllYzQtMDACLTAwCgBGAAA...</Url>
          <NavSlot $w={28} $ml={16}><AddWidget /></NavSlot>
          <NavSlot $w={28} $ml={32}><ReadAloud /></NavSlot>
          <NavSlot $w={28} $ml={33}><Star size={26} strokeWidth={1.3} color="#6e6e6e" /></NavSlot>
        </Pill>
        <NavSlot $w={28} $ml={26}><Split /></NavSlot>
        <NavSlot $w={28} $ml={40}><Favs /></NavSlot>
        <NavSlot $w={28} $ml={38}><Collect /></NavSlot>
        <NavSlot $w={30} $ml={37}><Health /></NavSlot>
        <NavSlot $w={28} $ml={37}><MoreHorizontal size={24} strokeWidth={2} color="#1f1f1f" /></NavSlot>
        <NavSlot $w={36} $ml={32}><CopilotLogo /></NavSlot>
      </AddressRow>

      <Workarea>
        <Frame>
          <Header>
            <HeadSlot $w={28} $ml={21}><svg width="24" height="24" viewBox="0 0 24 24" fill="#fff">{[3, 12, 21].flatMap((y) => [3, 12, 21].map((x) => <circle key={`${x}${y}`} cx={x} cy={y} r="2.300" />))}</svg></HeadSlot>
            <Brand>Outlook</Brand>
            <HeadSearch><Search size={24} strokeWidth={1.4} />Search</HeadSearch>
            <HeadSlot $w={28} $ml={238}><Video size={28} strokeWidth={1.5} /></HeadSlot>
            <MeetNow>Meet Now</MeetNow>
            <HeadSlot $w={28} $ml={29}><TeamsLine /></HeadSlot>
            <HeadSlot $w={28} $ml={44}><NoteI /></HeadSlot>
            <HeadSlot $w={28} $ml={44}><TodoBoard /></HeadSlot>
            <HeadSlot $w={28} $ml={44}><Bell size={27} strokeWidth={1.4} /></HeadSlot>
            <HeadSlot $w={28} $ml={44}><Settings size={27} strokeWidth={1.4} /></HeadSlot>
            <HeadSlot $w={28} $ml={44}><Lightbulb size={27} strokeWidth={1.4} /></HeadSlot>
            <Initials>HM</Initials>
          </Header>
          <AppBody>
            <Rail>
              <RailItem $active><RailMail /></RailItem>
              <RailItem><CalI /></RailItem>
              <RailItem><PeopleI /></RailItem>
              <RailItem><GroupsI /></RailItem>
              <RailItem><TodoLogo /></RailItem>
              <RailItem><BrandTile letter="W" tile="#185abd" bands={['#41a5ee', '#2b7cd3', '#185abd', '#103f91']} /></RailItem>
              <RailItem><BrandTile letter="X" tile="#107c41" bands={['#33c481', '#21a366', '#107c41', '#185c37']} /></RailItem>
              <RailItem><BrandTile letter="P" tile="#c43e1c" round /></RailItem>
              <RailItem><OneDriveLogo /></RailItem>
              <RailItem><AppsI /></RailItem>
            </Rail>
            <Main>
              <RibbonTabs>
                <HamSlot><Menu size={32} strokeWidth={1.3} /></HamSlot>
                <RibbonTab $active $ml={36} $w={57}>Home</RibbonTab>
                <RibbonTab $ml={46} $w={45}>View</RibbonTab>
                <RibbonTab $ml={46} $w={45}>Help</RibbonTab>
              </RibbonTabs>
              <RibbonRow>
                <Toolbar>
                  <NewEmail>
                    <NewMain><MailI s={28} />New email</NewMain>
                    <NewDrop><ChevronDown size={22} strokeWidth={1.5} /></NewDrop>
                  </NewEmail>
                  <Tool $ml={21}><TrashI s={28} /></Tool>
                  <Tool $ml={10} $w={14}><Chev /></Tool>
                  <Tool $ml={21}><ArchiveI s={27} c="#b7d4a8" /></Tool>
                  <Tool $ml={31}><ShieldI s={28} c="#a4262c" /></Tool>
                  <Tool $ml={10} $w={14}><Chev /></Tool>
                  <Tool $ml={20}><BroomI s={28} c="#c4c4c4" /></Tool>
                  <Tool $ml={32}><MoveI /></Tool>
                  <Tool $ml={9} $w={14}><Chev /></Tool>
                  <ToolSep $ml={13} />
                  <Tool $ml={20}><ReplyAllI s={28} c="#dcb6ea" /></Tool>
                  <Tool $ml={11} $w={14}><Chev c="#d0d0d0" /></Tool>
                  <ToolSep $ml={10} />
                  <Tool $ml={21}><ReadI s={28} c="#424242" /></Tool>
                  <ToolLabel $ml={8}>Read / Unread</ToolLabel>
                  <Tool $ml={33} $tf="scaleX(-1)"><Tag size={26} strokeWidth={1.3} color="#424242" /></Tool>
                  <Tool $ml={9} $w={14}><Chev /></Tool>
                  <Tool $ml={20}><Flag size={26} strokeWidth={1.4} color="#c4314b" /></Tool>
                  <Tool $ml={11} $w={14}><Chev /></Tool>
                  <Tool $ml={21} $tf="rotate(45deg)"><Pin size={26} strokeWidth={1.3} color="#7fb4e4" /></Tool>
                  <Tool $ml={31}><Clock size={26} strokeWidth={1.3} color="#c4c4c4" /></Tool>
                  <Tool $ml={8} $w={14}><Chev c="#d0d0d0" /></Tool>
                  <ToolSep $ml={13} />
                  <Tool $ml={21}><Printer size={27} strokeWidth={1.4} color="#424242" /></Tool>
                  <ToolSep $ml={20} />
                  <Tool $ml={23}><UndoI s={28} c="#c4c4c4" /></Tool>
                  <ToolSep $ml={22} />
                  <Tool $ml={21}><MoreHorizontal size={26} strokeWidth={2} color="#242424" /></Tool>
                </Toolbar>
                <OuterChevron><ChevronDown size={20} strokeWidth={1.3} /></OuterChevron>
              </RibbonRow>
              <Content>
                <FolderPane>
                  <SectionHead><Caret><ChevronDown size={18} strokeWidth={1.3} /></Caret>Favourites</SectionHead>
                  {favourites.map(([label, Icon]) => <Folder key={label} label={label} Icon={Icon} />)}
                  <FolderRow $link><FolderIcon />Add favourite</FolderRow>
                  <SectionHead $mt={15}><Caret><ChevronDown size={18} strokeWidth={1.3} /></Caret>Folders</SectionHead>
                  <FolderRow><RowCaret><ChevronRight size={18} strokeWidth={1.3} /></RowCaret><FolderIcon><InboxI s={28} /></FolderIcon>Inbox</FolderRow>
                  <FolderRow $sel><FolderIcon><JunkI s={28} /></FolderIcon>Junk Email<Count>1</Count></FolderRow>
                  {folders.map(([label, Icon]) => <Folder key={label} label={label} Icon={Icon} />)}
                  <FolderRow><FolderIcon><ArchiveI s={28} c="#616161" /></FolderIcon></FolderRow>
                </FolderPane>
                <ListPane>
                  <ListHead>
                    <Check><CheckMark /></Check>
                    <ListTitle>Junk Email</ListTitle>
                    <StarSlot><Star size={26} strokeWidth={1.3} /></StarSlot>
                    <IconBtn><MultiSel /></IconBtn>
                    <FilterSlot><ListFilter size={24} strokeWidth={1.4} /></FilterSlot>
                  </ListHead>
                  <Notice>
                    <TriangleAlert size={30} strokeWidth={1.2} />
                    <NoticeText>Items in Junk Email will be permanently deleted after<br />10 days</NoticeText>
                  </Notice>
                  <DayRow>Today</DayRow>
                  <MailRow>
                    <Check $top={29}><CheckMark /></Check>
                    <MailLines>
                      <Sender>hmareiwan@outlook.com</Sender>
                      <SubjectLine>New job application for Java...<TimeText>00:59</TimeText></SubjectLine>
                      <Preview>A new job application has been recei...</Preview>
                    </MailLines>
                  </MailRow>
                </ListPane>
                <ReadingCol>
                  <SubjectCard>New job application for JavaScript Developer</SubjectCard>
                  <MailCard>
                    <JunkBar>
                      <Info size={26} strokeWidth={1.2} />
                      <JunkText>This message was identified as junk. We'll delete it after 10<br />days. <a>It's not junk</a></JunkText>
                    </JunkBar>
                    <MsgHead>
                      <Persona>H</Persona>
                      <MsgFrom>
                        <FromName>hmareiwan@outlook.com</FromName>
                        <ToLine>To:&nbsp; You</ToLine>
                      </MsgFrom>
                      <MsgMeta>
                        <MetaIcons>
                          <MetaIcon $c="#c8c8c8"><ReplyI s={28} /></MetaIcon>
                          <MetaIcon $c="#c8c8c8"><ReplyAllI s={28} /></MetaIcon>
                          <MetaIcon $c="#0f6cbd"><ForwardI s={28} /></MetaIcon>
                          <MetaIcon $c="#0f6cbd"><MoreHorizontal size={26} strokeWidth={2} /></MetaIcon>
                        </MetaIcons>
                        <MetaDate>Wed 07/02/2024 00:59</MetaDate>
                      </MsgMeta>
                    </MsgHead>
                    <MsgBody>
                      A new job application has been received for the position:<br />
                      JavaScript Developer (Reference: LED24JSD). Their details are<br />
                      as follows:
                      <Gap30 />
                      Name: Hama Mari
                      <Gap30 />
                      Mobile: 6655443322
                      <Gap30 />
                      Email: mareiwan@yahoo.com
                    </MsgBody>
                    <ActionRow>
                      <ActionBtn $w={128} $c="#c8c8c8"><ActionIcon><ReplyI s={26} /></ActionIcon>Reply</ActionBtn>
                      <ActionBtn $w={156} $c="#242424"><ActionIcon><ForwardI s={26} /></ActionIcon>Forward</ActionBtn>
                    </ActionRow>
                  </MailCard>
                </ReadingCol>
                <ScrollTrack><ArrowUp /><Thumb /><ArrowDown /></ScrollTrack>
                <AdPane>
                  <AdBack><ArrowLeft size={20} strokeWidth={1.5} /></AdBack>
                  <AdsBy>Ads by</AdsBy>
                  <GoogleWord>Google</GoogleWord>
                  <SendFeedback>Send feedback</SendFeedback>
                  <WhyAd>Why this ad?<svg width="20" height="22" viewBox="0 0 20 22" fill="none" stroke="#9e9e9e" strokeWidth="1.600"><path d="M5 3H3v16h2M8 3l10 8-10 8M9 10v5M9 7v.2" /></svg></WhyAd>
                </AdPane>
              </Content>
            </Main>
          </AppBody>
        </Frame>
        <EdgeSide>
          <SideSlot><LensLogo /></SideSlot>
          <SideSlot><TagLogo /></SideSlot>
          <SideSlot><ToolboxLogo /></SideSlot>
          <SideSlot><ChessLogo /></SideSlot>
          <SideSlot><M365Logo /></SideSlot>
          <SideSlot><OutlookLogo /></SideSlot>
          <SideRule $mt={19} />
          <SideSlot $h={96}><Plus size={24} strokeWidth={1.3} /></SideSlot>
          <SideRule $mt={298} />
          <SideSlot $h={64}><PanelI /></SideSlot>
          <SideSlot $h={58}><Settings size={26} strokeWidth={1.4} color="#1f1f1f" /></SideSlot>
        </EdgeSide>
      </Workarea>

      <Taskbar>
        <TbSlot $w={38} $ml={28}><RainLogo /><Badge>1</Badge></TbSlot>
        <Weather>8°C<span>Heavy rain</span></Weather>
        <TbSlot $w={34} $ml={304}><WinLogo /></TbSlot>
        <TbSearch><Search size={28} strokeWidth={1.7} color="#2a2a2a" />Search</TbSearch>
        <TbSlot $w={34} $ml={21}>
          <CopilotLogo s={34} id="cq" a={['#1f6fe0', '#c04fe0']} b={['#3fc48a', '#f4c430']} />
          <PreTag>PRE</PreTag>
        </TbSlot>
        <TbSlot $w={36} $ml={31}><TaskView /></TbSlot>
        <EdgeTile><EdgeLogo /></EdgeTile>
        <TbSlot $w={38} $ml={18} $dot><FilesLogo /></TbSlot>
        <TbSlot $w={38} $ml={27} $dot><TeamsLogo /></TbSlot>
        <TbSlot $w={38} $ml={29}><VsCode /></TbSlot>
        <TbSlot $w={38} $ml={27} $dot><CmdLogo /></TbSlot>
        <TbSlot $w={38} $ml={29} $dot><NotesLogo /></TbSlot>
        <TbSlot $w={18} $ml={70}><ChevronUp size={24} strokeWidth={1.6} /></TbSlot>
        <TbSlot $w={26} $ml={26}><CloudLogo /></TbSlot>
        <Lang>ENG<br />UK</Lang>
        <TbSlot $w={26} $ml={22}><WifiI /></TbSlot>
        <TbSlot $w={26} $ml={10}><SpeakerI /></TbSlot>
        <TbSlot $w={26} $ml={10}><BatteryI /></TbSlot>
        <ClockBox>01:00<br />07/02/2024</ClockBox>
        <TbSlot $w={24} $ml={11}><TbBell /></TbSlot>
      </Taskbar>
    </Page>
  );
}
